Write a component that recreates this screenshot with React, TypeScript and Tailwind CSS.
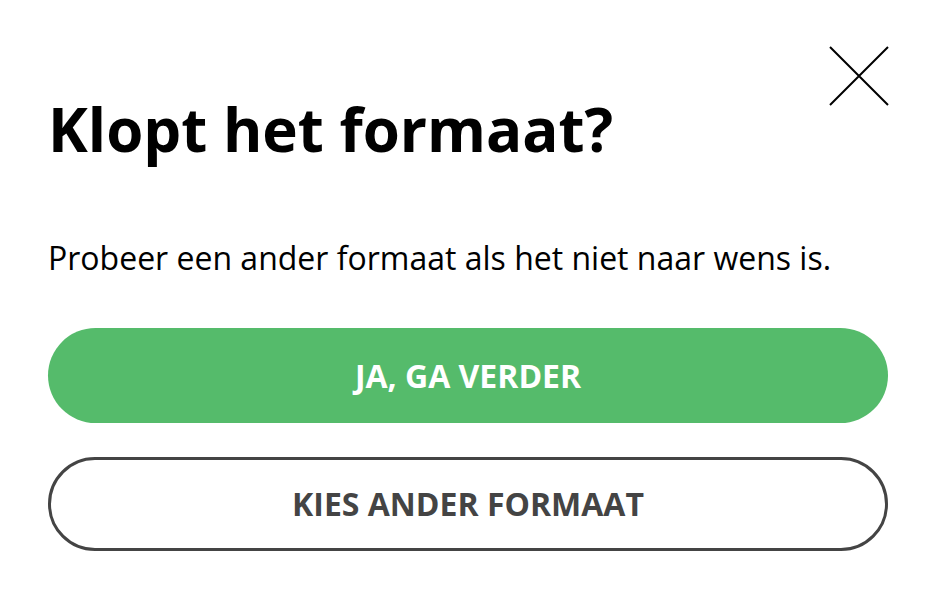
export default function App() {
  return (
    <div className="relative h-[616px] w-[936px] bg-white font-['Open_Sans',sans-serif]">
      <button type="button" aria-label="Sluiten" className="absolute left-[828px] top-[45px] h-[62px] w-[62px]">
        <svg viewBox="0 0 62 62" className="h-full w-full" fill="none" stroke="#000" strokeWidth="2">
          <path d="M2 2 L60 60 M60 2 L2 60" />
        </svg>
      </button>
      <div className="flex flex-col px-12 pt-[93px]">
        <h1 className="text-[60px] font-bold leading-[72px] text-black">Klopt het formaat?</h1>
        <p className="mt-[73px] text-[32px] leading-[40px] text-black">
          Probeer een ander formaat als het niet naar wens is.
        </p>
        <button
          type="button"
          className="mt-[50px] flex h-[95px] w-full items-center justify-center rounded-full bg-[#55bb6b] text-[32px] font-bold uppercase text-white"
        >
          Ja, ga verder
        </button>
        <button
          type="button"
          className="mt-[34px] flex h-[94px] w-full items-center justify-center rounded-full border-[3px] border-[#444] bg-white text-[32px] font-bold uppercase text-[#444]"
        >
          Kies ander formaat
        </button>
      </div>
    </div>
  );
}
